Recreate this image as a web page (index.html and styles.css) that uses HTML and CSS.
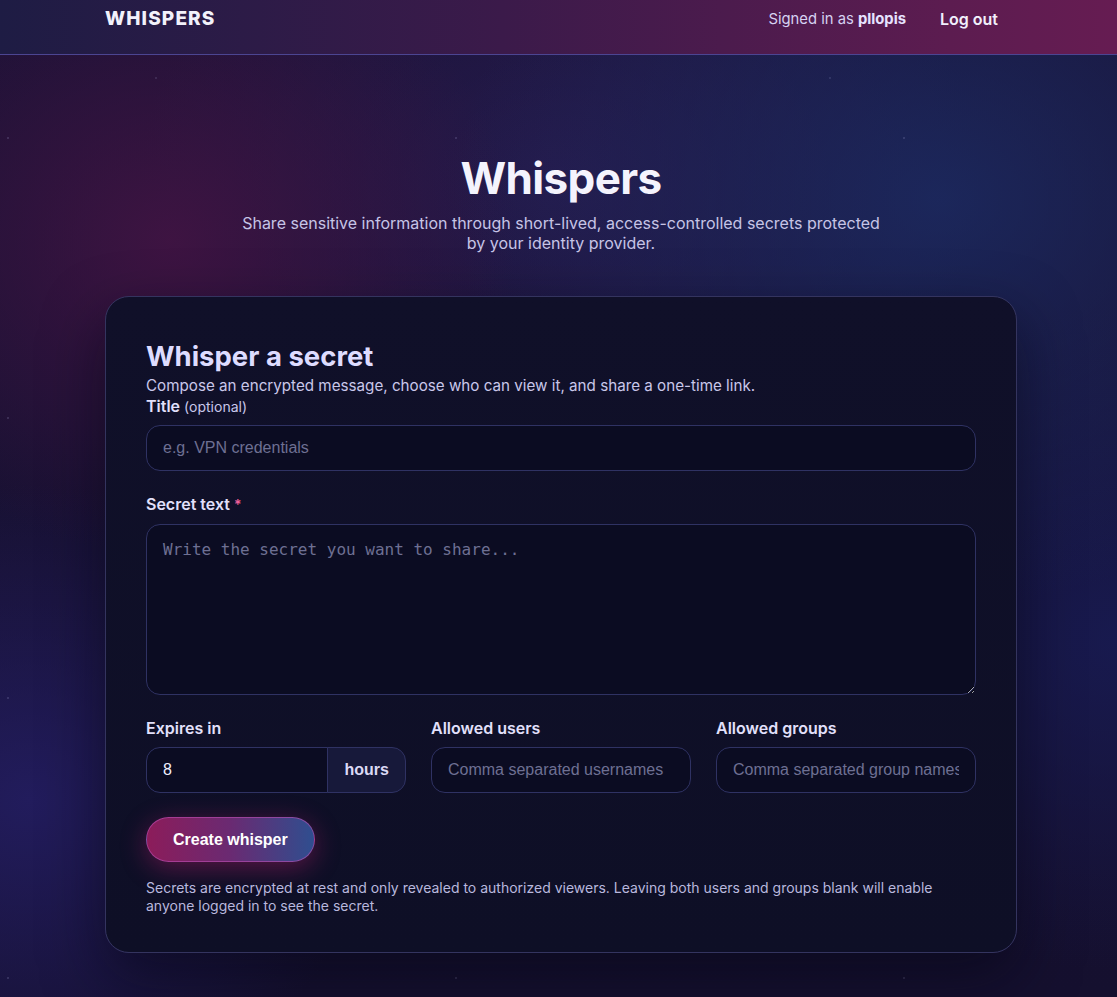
FILE: index.html
```html
<!DOCTYPE html>
<html lang="en">
<head>
<meta charset="utf-8">
<title>Whispers</title>
<link rel="stylesheet" href="styles.css">
</head>
<body>
<header class="topbar">
  <div class="topbar-inner">
    <div class="brand">WHISPERS</div>
    <nav class="nav">
      <span class="signed">Signed in as <strong>pllopis</strong></span>
      <a class="logout" href="#">Log out</a>
    </nav>
  </div>
</header>
<main class="page">
  <section class="hero">
    <h1>Whispers</h1>
    <p>Share sensitive information through short-lived, access-controlled secrets protected by your identity provider.</p>
  </section>
  <section class="card">
    <h2>Whisper a secret</h2>
    <p class="lead">Compose an encrypted message, choose who can view it, and share a one-time link.</p>
    <div class="field">
      <label class="label">Title <span class="opt">(optional)</span></label>
      <input class="input" type="text" placeholder="e.g. VPN credentials">
    </div>
    <div class="field">
      <label class="label">Secret text <span class="req">*</span></label>
      <textarea class="input textarea" placeholder="Write the secret you want to share..."></textarea>
    </div>
    <div class="grid">
      <div class="col">
        <label class="label">Expires in</label>
        <div class="group">
          <input class="input group-input" type="text" value="8">
          <span class="addon">hours</span>
        </div>
      </div>
      <div class="col">
        <label class="label">Allowed users</label>
        <input class="input" type="text" placeholder="Comma separated usernames">
      </div>
      <div class="col">
        <label class="label">Allowed groups</label>
        <input class="input" type="text" placeholder="Comma separated group names">
      </div>
    </div>
    <button class="btn" type="button">Create whisper</button>
    <p class="note">Secrets are encrypted at rest and only revealed to authorized viewers. Leaving both users and groups blank will enable anyone logged in to see the secret.</p>
  </section>
</main>
</body>
</html>
```
FILE: styles.css
```css
* { box-sizing: border-box; }
html, body { margin: 0; padding: 0; }
body {
  min-height: 997px;
  font-family: "Inter", "Noto Sans", sans-serif;
  color: #e4e2fa;
  background-color: #130f2e;
  background-image:
    radial-gradient(circle at 1px 1px, rgba(190,190,240,0.16) 0.8px, transparent 1.4px),
    radial-gradient(circle at 1px 1px, rgba(190,190,240,0.13) 0.8px, transparent 1.4px),
    radial-gradient(ellipse 460px 420px at 170px 240px, rgba(68,20,68,0.85), transparent 75%),
    radial-gradient(ellipse 620px 520px at 940px 200px, rgba(28,44,100,0.8), transparent 78%),
    radial-gradient(ellipse 460px 420px at 30px 800px, rgba(36,30,100,0.85), transparent 75%),
    radial-gradient(ellipse 560px 440px at 560px 180px, rgba(42,30,86,0.7), transparent 75%),
    radial-gradient(ellipse 520px 440px at 1120px 640px, rgba(24,28,86,0.8), transparent 75%),
    linear-gradient(180deg, #1a1236 0%, #15102f 100%);
  background-size: 448px 280px, 674px 400px, auto, auto, auto, auto, auto, auto;
  background-position: 7px 137px, 155px 77px, 0 0, 0 0, 0 0, 0 0, 0 0, 0 0;
}

.topbar {
  height: 55px;
  background: linear-gradient(90deg, #1e1c44 0%, #3b1a4a 45%, #5c1c50 85%, #661c52 100%);
  border-bottom: 1px solid #4c4592;
}
.topbar-inner {
  width: 912px;
  margin-left: calc(50% - 453.5px);
  padding: 8px 19px 0 0;
  display: flex;
  justify-content: space-between;
  align-items: center;
}
.brand {
  font-size: 19px;
  font-weight: 800;
  letter-spacing: 0.06em;
  color: #f2f1fb;
  line-height: 22px;
}
.nav {
  display: flex;
  align-items: center;
  gap: 34px;
  line-height: 22px;
}
.signed { font-size: 14.8px; color: #d6d2f2; }
.signed strong { font-weight: 700; color: #e6e3ff; }
.logout { font-size: 16px; font-weight: 600; color: #f1effc; text-decoration: none; }

.page {
  width: 912px;
  margin-left: calc(50% - 453.5px);
  padding-bottom: 44px;
}
.hero {
  text-align: center;
  padding-top: 96px;
  margin-bottom: 43px;
}
.hero h1 {
  margin: 0;
  font-size: 44px;
  line-height: 54px;
  font-weight: 700;
  color: #f4f3fd;
  letter-spacing: -0.015em;
}
.hero p {
  margin: 8px auto 0;
  max-width: 645px;
  font-size: 16px;
  line-height: 20px;
  color: #c6c4e6;
}

.card {
  background: linear-gradient(180deg, #101029 0%, #0e0f26 100%);
  border: 1px solid #34345f;
  border-radius: 24px;
  padding: 42px 40px 37px;
  box-shadow: 0 24px 60px rgba(5, 5, 20, 0.55);
}
.card h2 {
  margin: 0;
  font-size: 27.5px;
  line-height: 34px;
  font-weight: 700;
  color: #dedcff;
}
.lead {
  margin: 3px 0 0;
  font-size: 15.2px;
  line-height: 20px;
  color: #c9c7ea;
}
.field { margin-bottom: 23px; }
.field:first-of-type .label { margin-bottom: 8px; }
.label {
  display: block;
  font-size: 16px;
  font-weight: 600;
  line-height: 20px;
  color: #e2e0fb;
  margin-bottom: 9px;
}
.opt { font-size: 14px; font-weight: 400; color: #c9c7ea; }
.req { color: #f0609a; font-size: 14px; }

.input {
  display: block;
  width: 100%;
  height: 46px;
  background: #0b0c22;
  border: 1px solid #2f3263;
  border-radius: 14px;
  padding: 0 16px;
  font-family: "Liberation Sans", Arial, sans-serif;
  font-size: 16px;
  color: #f1f0ff;
  outline: none;
}
.input::placeholder { color: #6e7093; }
.textarea {
  height: 171px;
  padding: 14px 16px;
  resize: vertical;
  font-family: "DejaVu Sans Mono", "Liberation Mono", monospace;
  font-size: 16px;
  line-height: 22px;
}

.grid {
  display: grid;
  grid-template-columns: repeat(3, 1fr);
  gap: 25px;
  margin-bottom: 24px;
}
.group { display: flex; }
.group-input {
  flex: 1;
  min-width: 0;
  border-radius: 14px 0 0 14px;
}
.addon {
  display: flex;
  align-items: center;
  height: 46px;
  padding: 0 16px 0 17px;
  background: #17193a;
  border: 1px solid #2f3263;
  margin-left: -1px;
  border-radius: 0 14px 14px 0;
  font-family: "Liberation Sans", Arial, sans-serif;
  font-size: 16px;
  font-weight: 700;
  color: #dcdaf6;
}

.btn {
  display: block;
  height: 45px;
  padding: 0 26px;
  border-radius: 23px;
  border: 1px solid rgba(190, 80, 180, 0.6);
  background: linear-gradient(90deg, #8c1c5a 0%, #6a2a72 50%, #2f4e8f 100%);
  box-shadow: 0 6px 26px rgba(190, 30, 110, 0.42);
  font-family: "Liberation Sans", Arial, sans-serif;
  font-size: 16px;
  font-weight: 700;
  color: #ffffff;
  cursor: pointer;
}
.note {
  margin: 17px 0 0;
  font-size: 14px;
  line-height: 18px;
  color: #b9b8de;
}
```
